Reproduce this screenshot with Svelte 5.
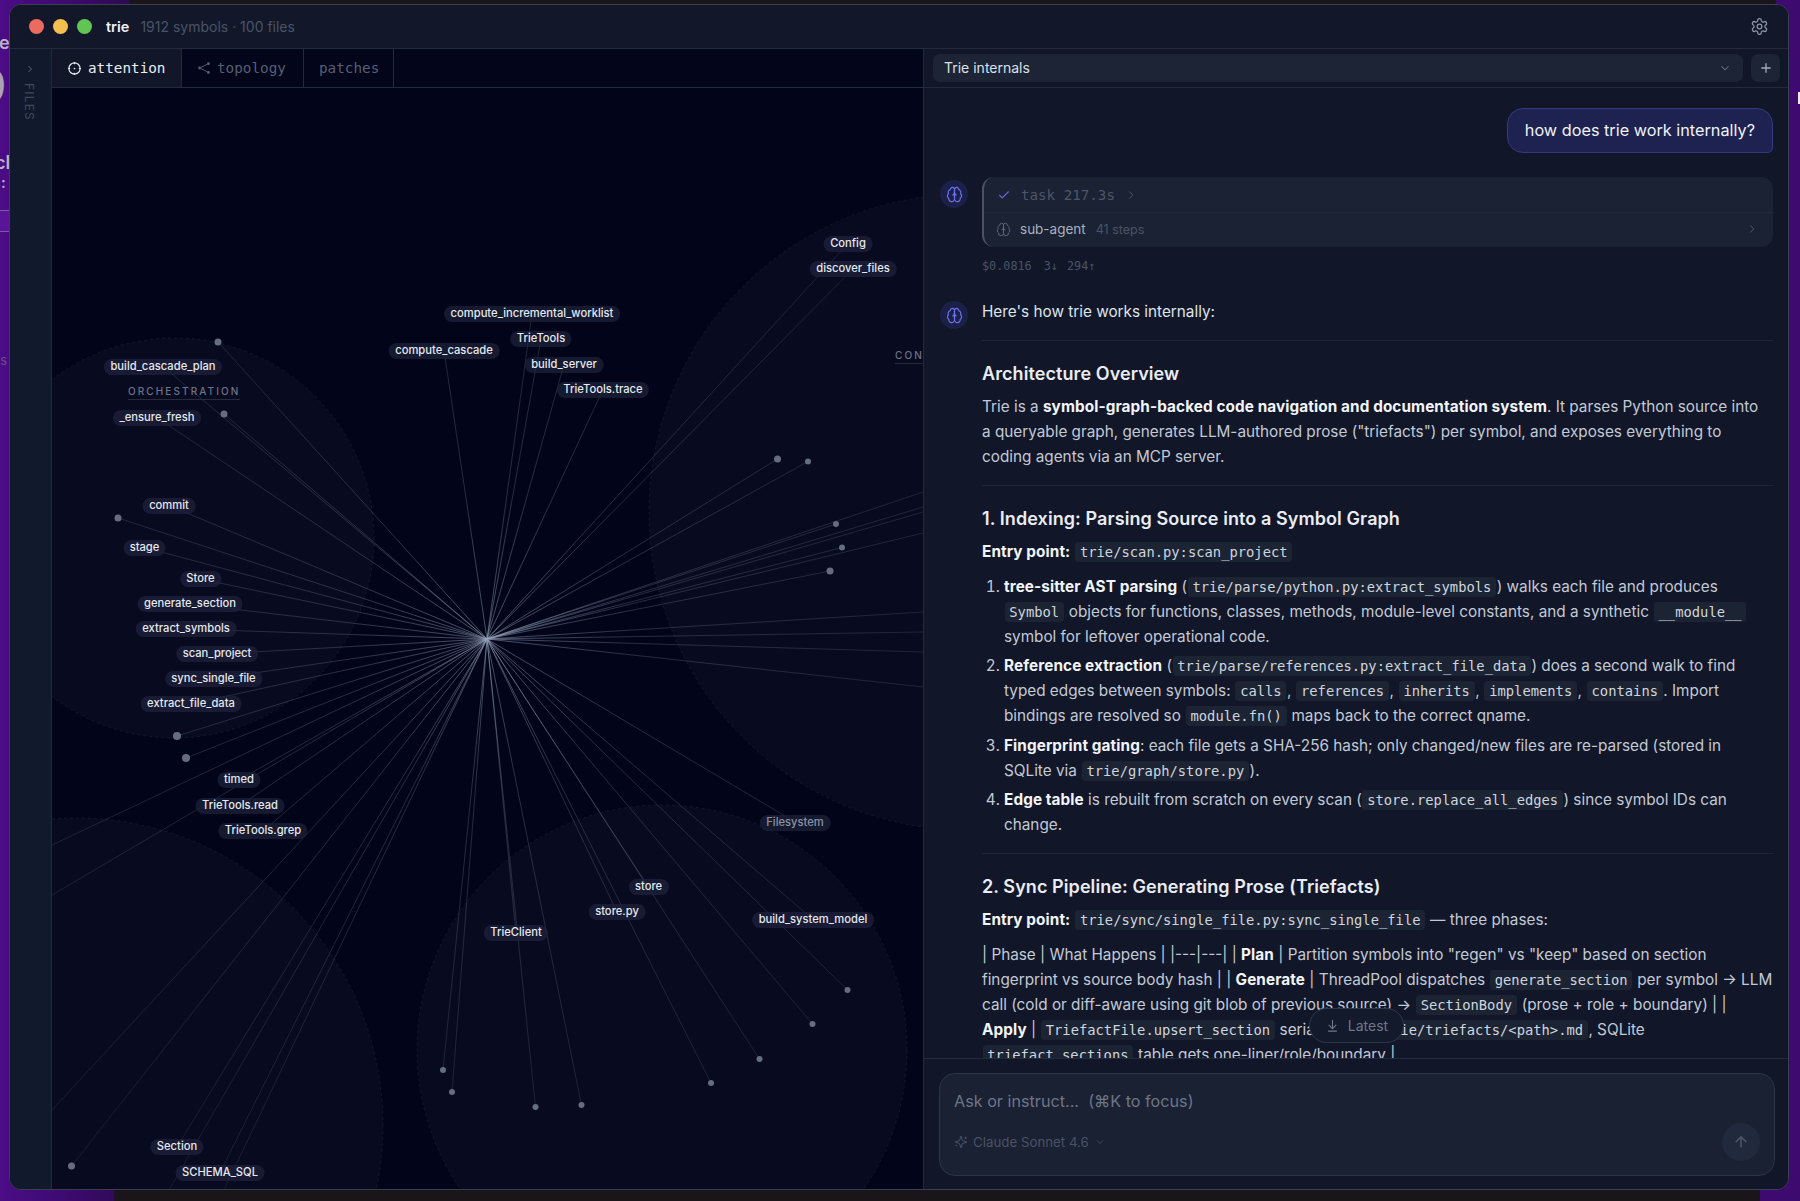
<script>
  const OX = 52, OY = 88;
  const hub = [487, 639];
  const labels = [
    ['Config', 848, 243.5], ['discover_files', 853, 269], ['compute_incremental_worklist', 532, 314],
    ['TrieTools', 541, 339], ['compute_cascade', 444, 350.5], ['build_server', 564, 364.5],
    ['TrieTools.trace', 603, 389.5], ['build_cascade_plan', 163, 366.5], ['_ensure_fresh', 157, 417.5],
    ['commit', 169, 505.5], ['stage', 144.5, 547.5], ['Store', 200.5, 579], ['generate_section', 190, 604],
    ['extract_symbols', 186, 629], ['scan_project', 217, 654], ['sync_single_file', 213.5, 679],
    ['extract_file_data', 191, 704], ['timed', 239, 780], ['TrieTools.read', 240, 805.5],
    ['TrieTools.grep', 263, 831], ['store', 648.5, 887], ['store.py', 617, 912], ['TrieClient', 516, 933],
    ['build_system_model', 813, 919.5], ['Section', 177, 1147], ['SCHEMA_SQL', 220, 1172.5]
  ];
  const dots = [
    [218, 342, 3.5], [224, 414, 3.5], [118, 518, 3.5], [177, 736, 4], [186, 758, 4], [71.5, 1166, 3.5],
    [443, 1070, 3], [452, 1092, 3], [535.5, 1107, 3], [581.5, 1105, 3], [711, 1083, 3], [759.5, 1059, 3],
    [812.5, 1024, 3], [847.5, 990, 3], [777.5, 459, 3.5], [808, 461.5, 3], [836, 524, 3], [842, 547.5, 3], [830, 571, 3.5]
  ];
  const extras = [
    [923, 492], [923, 507], [923, 512], [923, 533], [923, 612], [923, 632], [923, 652], [923, 687],
    [52, 845], [52, 895], [52, 1110], [169, 1190], [224, 1190]
  ];
  const groups = [[174, 538, 200], [76, 1125, 307], [662, 1050, 245], [967, 512, 318]];
  const brain = [
    'M12 5a3 3 0 1 0-5.997.125 4 4 0 0 0-2.526 5.77 4 4 0 0 0 .556 6.588A4 4 0 1 0 12 18Z',
    'M12 5a3 3 0 1 1 5.997.125 4 4 0 0 1 2.526 5.77 4 4 0 0 1-.556 6.588A4 4 0 1 1 12 18Z',
    'M15 13a4.5 4.5 0 0 1-3-4 4.5 4.5 0 0 1-3 4', 'M12 5v13'
  ];
</script>

<div class="desktop">
  <div class="wall-left"></div>
  <div class="wall-right"></div>
  <div class="peek peek-e">e</div>
  <div class="peek peek-9">9</div>
  <div class="peek peek-c">cl</div>
  <div class="peek peek-d">:</div>
  <div class="peek-band"></div>
  <div class="peek peek-t">ts</div>
  <div class="cursor"></div>

  <div class="window">
    <header class="titlebar">
      <span class="light red"></span><span class="light yellow"></span><span class="light green"></span>
      <strong class="app">trie</strong>
      <span class="meta">1912 symbols · 100 files</span>
      <svg class="gear" viewBox="0 0 24 24" width="19" height="19"><path d="M12.22 2h-.44a2 2 0 0 0-2 2v.18a2 2 0 0 1-1 1.73l-.43.25a2 2 0 0 1-2 0l-.15-.08a2 2 0 0 0-2.73.73l-.22.38a2 2 0 0 0 .73 2.73l.15.1a2 2 0 0 1 1 1.72v.51a2 2 0 0 1-1 1.74l-.15.09a2 2 0 0 0-.73 2.73l.22.38a2 2 0 0 0 2.73.73l.15-.08a2 2 0 0 1 2 0l.43.25a2 2 0 0 1 1 1.73V20a2 2 0 0 0 2 2h.44a2 2 0 0 0 2-2v-.18a2 2 0 0 1 1-1.73l.43-.25a2 2 0 0 1 2 0l.15.08a2 2 0 0 0 2.73-.73l.22-.39a2 2 0 0 0-.73-2.73l-.15-.08a2 2 0 0 1-1-1.74v-.5a2 2 0 0 1 1-1.74l.15-.09a2 2 0 0 0 .73-2.73l-.22-.38a2 2 0 0 0-2.73-.73l-.15.08a2 2 0 0 1-2 0l-.43-.25a2 2 0 0 1-1-1.73V4a2 2 0 0 0-2-2z"/><circle cx="12" cy="12" r="3"/></svg>
    </header>

    <div class="body">
      <aside class="rail">
        <svg viewBox="0 0 24 24" width="12" height="12" class="rail-chev"><path d="m9 6 6 6-6 6"/></svg>
        <span class="rail-label">FILES</span>
      </aside>

      <section class="graph-col">
        <nav class="tabs">
          <div class="tab active">
            <svg viewBox="0 0 16 16" width="15" height="15"><circle cx="8" cy="8" r="6"/><circle cx="8" cy="8" r="0.9" class="solid"/><path d="M8 1v2.4M8 12.6V15M1 8h2.4M12.6 8H15"/></svg>
            attention
          </div>
          <div class="tab">
            <svg viewBox="0 0 16 16" width="14" height="14"><circle cx="13" cy="3" r="1.6" class="solid"/><circle cx="3" cy="8" r="1.6" class="solid"/><circle cx="13" cy="13" r="1.6" class="solid"/><path d="M12 3.6 4 7.6M4 8.4l8 4"/></svg>
            topology
          </div>
          <div class="tab">patches</div>
        </nav>

        <div class="canvas">
          <svg class="edges" width="871" height="1102" viewBox="{OX} {OY} 871 1102">
            <defs>
              <radialGradient id="fade" gradientUnits="userSpaceOnUse" cx={hub[0]} cy={hub[1]} r="600">
                <stop offset="0" stop-color="#94a3b8" stop-opacity="0.5" />
                <stop offset="0.25" stop-color="#94a3b8" stop-opacity="0.25" />
                <stop offset="1" stop-color="#94a3b8" stop-opacity="0.11" />
              </radialGradient>
            </defs>
            {#each groups as g}
              <circle class="group" cx={g[0]} cy={g[1]} r={g[2]} />
            {/each}
            {#each labels as l}
              <line x1={hub[0]} y1={hub[1]} x2={l[1]} y2={l[2]} stroke="url(#fade)" />
            {/each}
            <line x1={hub[0]} y1={hub[1]} x2="795" y2="822" stroke="url(#fade)" />
            {#each dots as d}
              <line x1={hub[0]} y1={hub[1]} x2={d[0]} y2={d[1]} stroke="url(#fade)" stroke-width="0.8" />
            {/each}
            {#each extras as e}
              <line x1={hub[0]} y1={hub[1]} x2={e[0]} y2={e[1]} stroke="url(#fade)" stroke-width="0.8" />
            {/each}
            {#each dots as d}
              <circle class="dot" cx={d[0]} cy={d[1]} r={d[2]} />
            {/each}
          </svg>

          <div class="cluster" style="left:{128 - OX}px;top:{384 - OY}px">ORCHESTRATION</div>
          <div class="cluster" style="left:{895 - OX}px;top:{348 - OY}px">CONTROL</div>

          {#each labels as l}
            <span class="node" style="left:{l[1] - OX}px;top:{l[2] - OY}px">{l[0]}</span>
          {/each}
          <span class="node dim" style="left:{795 - OX}px;top:{822.5 - OY}px">Filesystem</span>
        </div>
      </section>

      <section class="chat">
        <div class="chat-head">
          <div class="select">
            <span>Trie internals</span>
            <svg viewBox="0 0 24 24" width="14" height="14"><path d="m6 9 6 6 6-6"/></svg>
          </div>
          <div class="plus"><svg viewBox="0 0 24 24" width="16" height="16"><path d="M5 12h14M12 5v14"/></svg></div>
        </div>

        <div class="scroll">
          <div class="user"><div class="bubble">how does trie work internally?</div></div>

          <div class="turn task-turn">
            <div class="avatar"><svg viewBox="0 0 24 24" width="17" height="17">{#each brain as p}<path d={p}/>{/each}</svg></div>
            <div class="turn-main">
              <div class="task">
                <div class="task-head">
                  <svg class="check" viewBox="0 0 24 24" width="14" height="14"><path d="M20 6 9 17l-5-5"/></svg>
                  <span>task 217.3s</span>
                  <svg class="mini" viewBox="0 0 24 24" width="14" height="14"><path d="m9 6 6 6-6 6"/></svg>
                </div>
                <div class="task-row">
                  <svg class="sub-icon" viewBox="0 0 24 24" width="15" height="15">{#each brain as p}<path d={p}/>{/each}</svg>
                  <span class="sub">sub-agent</span>
                  <span class="steps">41 steps</span>
                  <svg class="mini end" viewBox="0 0 24 24" width="14" height="14"><path d="m9 6 6 6-6 6"/></svg>
                </div>
              </div>
              <div class="cost"><span>$0.0816</span><span>3↓</span><span class="up">294↑</span></div>
            </div>
          </div>

          <div class="turn answer">
            <div class="avatar"><svg viewBox="0 0 24 24" width="17" height="17">{#each brain as p}<path d={p}/>{/each}</svg></div>
            <div class="prose">
              <p class="first">Here's how trie works internally:</p>
              <hr />
              <h3>Architecture Overview</h3>
              <p class="narrow">Trie is a <b>symbol-graph-backed code navigation and documentation system</b>. It parses Python source into a queryable graph, generates LLM-authored prose ("triefacts") per symbol, and exposes everything to coding agents via an MCP server.</p>
              <hr />
              <h3>1. Indexing: Parsing Source into a Symbol Graph</h3>
              <p><b>Entry point:</b> <code>trie/scan.py:scan_project</code></p>
              <ol>
                <li><b>tree-sitter AST parsing</b> (<code>trie/parse/python.py:extract_symbols</code>) walks each file and produces <code>Symbol</code> objects for functions, classes, methods, module-level constants, and a synthetic <code>__module__</code> symbol for leftover operational code.</li>
                <li><b>Reference extraction</b> (<code>trie/parse/references.py:extract_file_data</code>) does a second walk to find typed edges between symbols: <code>calls</code>, <code>references</code>, <code>inherits</code>, <code>implements</code>, <code>contains</code>. Import bindings are resolved so <code>module.fn()</code> maps back to the correct qname.</li>
                <li><b>Fingerprint gating</b>: each file gets a SHA-256 hash; only changed/new files are re-parsed (stored in SQLite via <code>trie/graph/store.py</code>).</li>
                <li><b>Edge table</b> is rebuilt from scratch on every scan (<code>store.replace_all_edges</code>) since symbol IDs can change.</li>
              </ol>
              <hr />
              <h3>2. Sync Pipeline: Generating Prose (Triefacts)</h3>
              <p><b>Entry point:</b> <code>trie/sync/single_file.py:sync_single_file</code> — three phases:</p>
              <p>| Phase | What Happens | |---|---| | <b>Plan</b> | Partition symbols into "regen" vs "keep" based on section fingerprint vs source body hash | | <b>Generate</b> | ThreadPool dispatches <code>generate_section</code> per symbol → LLM call (cold or diff-aware using git blob of previous source) → <code>SectionBody</code> (prose + role + boundary) | | <b>Apply</b> | <code>TriefactFile.upsert_section</code> serializes to <code>.trie/triefacts/&lt;path&gt;.md</code>, SQLite <code>triefact_sections</code> table gets one-liner/role/boundary |</p>
            </div>
          </div>
          <div class="latest">
            <svg viewBox="0 0 24 24" width="15" height="15"><path d="M12 3v13M6 11l6 6 6-6M5 21h14"/></svg>
            Latest
          </div>
        </div>

        <div class="composer">
          <div class="input">
            <div class="placeholder">Ask or instruct...&nbsp; (⌘K to focus)</div>
            <div class="input-foot">
              <div class="model">
                <svg viewBox="0 0 24 24" width="14" height="14"><path d="M9.937 15.5A2 2 0 0 0 8.5 14.063l-6.135-1.582a.5.5 0 0 1 0-.962L8.5 9.936A2 2 0 0 0 9.937 8.5l1.582-6.135a.5.5 0 0 1 .963 0L14.063 8.5A2 2 0 0 0 15.5 9.937l6.135 1.581a.5.5 0 0 1 0 .964L15.5 14.063a2 2 0 0 0-1.437 1.437l-1.582 6.135a.5.5 0 0 1-.963 0z"/><path d="M20 3v4M22 5h-4M4 17v2M5 18H3"/></svg>
                Claude Sonnet 4.6
                <svg viewBox="0 0 24 24" width="12" height="12"><path d="m6 9 6 6 6-6"/></svg>
              </div>
              <div class="send"><svg viewBox="0 0 24 24" width="18" height="18"><path d="m5 12 7-7 7 7M12 19V5"/></svg></div>
            </div>
          </div>
        </div>
      </section>
    </div>
  </div>
</div>

<style>
  :global(body) { margin: 0; background: #1a1518; }
  .desktop { position: relative; width: 1800px; height: 1201px; overflow: hidden; background: #1a1518; font-family: Inter, "Noto Sans", sans-serif; }
  .wall-left { position: absolute; left: 0; top: 0; bottom: 0; width: 130px; background: linear-gradient(90deg, #4b0c86, #3a0a6a 60%, #2d0a50); clip-path: polygon(0 0, 100% 0, 88% 100%, 0 100%); }
  .wall-right { position: absolute; right: 0; top: 0; bottom: 0; width: 40px; background: #3d0a70; clip-path: polygon(40% 0, 100% 0, 100% 100%, 0 100%, 0 8%); }
  .peek { position: absolute; color: #b9b3c6; font-weight: 600; }
  .peek-e { left: -1px; top: 32px; font-size: 18px; }
  .peek-9 { left: -22px; top: 58px; font-size: 46px; font-weight: 400; color: #a9a3b5; }
  .peek-c { left: -5px; top: 152px; font-size: 18px; }
  .peek-d { left: 1px; top: 173px; font-size: 15px; }
  .peek-t { left: -4px; top: 352px; font-size: 13px; font-weight: 400; color: #6b4a8e; }
  .peek-band { position: absolute; left: 0; top: 210px; width: 9px; height: 20px; border-top: 1px solid #7a5aa0; border-bottom: 1px solid #7a5aa0; background: #5a1498; }
  .cursor { position: absolute; right: 0; top: 92px; width: 2px; height: 12px; background: #e8e8ee; }

  .window { position: absolute; left: 9px; top: 4px; width: 1780px; height: 1186px; box-sizing: border-box; display: flex; flex-direction: column; background: #111729; border: 1px solid #3a3f50; border-radius: 12px; overflow: hidden; }

  .titlebar { height: 44px; flex: none; display: flex; align-items: center; padding: 0 20px 1px 19px; box-sizing: border-box; border-bottom: 1px solid #232a3b; background: #12182a; }
  .light { width: 15px; height: 15px; border-radius: 50%; margin-right: 9px; }
  .red { background: #ec6a5e; } .yellow { background: #f4bf4f; } .green { background: #61c554; }
  .app { margin-left: 5px; font-size: 14.5px; font-weight: 600; color: #eef1f6; }
  .meta { margin-left: 11px; font-size: 14px; color: #4a5266; }
  .gear { margin-left: auto; margin-right: -1px; fill: none; stroke: #8b94a8; stroke-width: 1.6; }

  .body { flex: 1; min-height: 0; display: flex; }
  .rail { width: 42px; flex: none; box-sizing: border-box; display: flex; flex-direction: column; align-items: center; padding: 14px 2px 0 0; background: #111a2c; border-right: 1px solid #232a3b; }
  .rail-chev { fill: none; stroke: #5c6579; stroke-width: 2; }
  .rail-label { margin-top: 8px; writing-mode: vertical-rl; font-size: 12px; letter-spacing: 1.2px; color: #3f485c; }

  .graph-col { width: 871px; flex: none; display: flex; flex-direction: column; background: #02041a; }
  .tabs { height: 39px; flex: none; box-sizing: border-box; display: flex; border-bottom: 1px solid #232a3b; background: #03051a; }
  .tab { display: flex; align-items: center; gap: 6px; padding: 0 15px; box-sizing: border-box; border-right: 1px solid #232a3b; font-family: "DejaVu Sans Mono", monospace; font-size: 14.3px; color: #565f73; }
  .tab:nth-child(1) { width: 130px; } .tab:nth-child(2) { width: 122px; } .tab:nth-child(3) { width: 90px; }
  .tab.active { background: #111729; color: #e9edf3; }
  .tab svg { flex: none; fill: none; stroke: currentColor; stroke-width: 1.2; }
  .tab svg .solid { fill: currentColor; stroke: none; }

  .canvas { position: relative; flex: 1; overflow: hidden; }
  .edges { position: absolute; left: 0; top: 0; display: block; }
  .edges line { stroke-width: 1; }
  .group { fill: rgba(255,255,255,0.028); stroke: rgba(148,163,184,0.1); stroke-dasharray: 3 3; }
  .dot { fill: #666d80; }
  .cluster { position: absolute; box-sizing: border-box; height: 16px; line-height: 14px; font-size: 10px; font-weight: 500; letter-spacing: 2.1px; color: #6c7486; border-bottom: 1px solid #262c3d; white-space: nowrap; }
  .node { position: absolute; transform: translate(-50%, -50%); height: 16px; line-height: 15px; padding: 0 6.5px; border-radius: 8px; background: rgba(30,35,58,0.72); color: #e4e8ef; font-size: 11.2px; font-weight: 500; white-space: nowrap; }
  .node.dim { color: #8a91a1; }

  .chat { flex: 1; min-width: 0; display: flex; flex-direction: column; border-left: 1px solid #232a3b; background: #111729; }
  .chat-head { height: 39px; flex: none; box-sizing: border-box; display: flex; gap: 8px; padding: 5px 8px 5px 9px; border-bottom: 1px solid #232a3b; }
  .select { flex: 1; display: flex; align-items: center; justify-content: space-between; padding: 0 11px 1px 11px; background: #1d2435; border-radius: 7px; font-size: 14px; color: #dbe0e8; }
  .select svg { fill: none; stroke: #6b7487; stroke-width: 1.8; }
  .plus { width: 29px; display: flex; align-items: center; justify-content: center; background: #1d2435; border-radius: 7px; }
  .plus svg { fill: none; stroke: #a4acbc; stroke-width: 2; }

  .scroll { position: relative; flex: 1; min-height: 0; overflow: hidden; box-sizing: border-box; padding: 20px 15px 0 16px; }
  .user { display: flex; justify-content: flex-end; }
  .bubble { height: 45px; box-sizing: border-box; display: flex; align-items: center; padding: 0 17px 2px; border: 1px solid #35397f; border-radius: 16px 16px 5px 16px; background: #1e2250; color: #f0f2f7; font-size: 16.25px; }
  .turn { display: flex; gap: 14px; }
  .task-turn { margin-top: 24px; }
  .answer { margin-top: 26px; }
  .avatar { width: 28px; height: 28px; flex: none; margin-top: 3px; border-radius: 50%; background: #1b2048; display: flex; align-items: center; justify-content: center; }
  .avatar svg { fill: none; stroke: #6c72ea; stroke-width: 1.6; }
  .answer .avatar { margin-top: 1px; }
  .turn-main { flex: 1; min-width: 0; }
  .task { height: 70px; box-sizing: border-box; border-left: 2px solid #4a5264; border-radius: 12px; background: #1b2233; }
  .task-head { height: 35px; display: flex; align-items: center; gap: 8px; padding-left: 13px; border-bottom: 1px solid #202839; font-family: "DejaVu Sans Mono", monospace; font-size: 14.2px; color: #4d5568; }
  .task-head span { margin-left: 2px; }
  .task-head .mini { margin-left: 1px; }
  .check { fill: none; stroke: #6366d8; stroke-width: 2; }
  .mini { fill: none; stroke: #4d5568; stroke-width: 1.7; }
  .task-row { height: 32px; display: flex; align-items: center; padding-left: 12px; }
  .sub-icon { fill: none; stroke: #5f687b; stroke-width: 1.5; margin-right: 9px; }
  .sub { font-size: 13.5px; color: #a9b0bf; }
  .steps { margin-left: 10px; font-size: 12.5px; color: #4a5266; }
  .end { margin-left: auto; margin-right: 14px; }
  .cost { margin-top: 12px; display: flex; gap: 12px; font-family: "DejaVu Sans Mono", monospace; font-size: 11.8px; line-height: 15px; color: #4a5266; }
  .cost .up { margin-left: -3px; }

  .prose { flex: 1; min-width: 0; font-size: 15.3px; line-height: 25px; color: #c3c9d4; margin-top: -1px; }
  .prose p { margin: 9.8px 0 0; }
  .prose p.first { margin: 0; color: #dfe3ea; }
  .prose p.narrow { padding-right: 6px; }
  .prose b { font-weight: 700; letter-spacing: 0.1px; color: #f1f4f8; }
  .prose hr { border: 0; height: 1px; background: #1f2636; margin: 16px 0 0; }
  .prose h3 { margin: 20px 0 8px; font-size: 18px; line-height: 25px; font-weight: 600; letter-spacing: 0.08px; color: #e9ecf2; }
  .prose h3 + p { margin-top: 0; }
  .prose ol { margin: 9.5px 0 0; padding-left: 22px; }
  .prose li { padding-left: 0; margin-top: 4.6px; }
  .prose li:first-child { margin-top: 0; }
  .prose code { font-family: "DejaVu Sans Mono", monospace; font-size: 13.8px; line-height: 1; padding: 2px 4.8px; margin: 0 0.5px; border-radius: 4px; background: #1c2434; color: #cfd5df; }

  .latest { position: absolute; left: 385px; top: 920px; height: 35px; width: 95px; box-sizing: border-box; display: flex; align-items: center; justify-content: center; gap: 8px; border: 1px solid #2f3749; border-radius: 18px; background: #131a2c; font-size: 14px; color: #6f778a; }
  .latest svg { fill: none; stroke: #6f778a; stroke-width: 1.8; }

  .composer { height: 131px; flex: none; box-sizing: border-box; padding: 14px 13px 13px 15px; border-top: 1px solid #232a3b; }
  .input { height: 100%; box-sizing: border-box; display: flex; flex-direction: column; padding: 17px 14px 0 14px; background: #1a2132; border: 1px solid #2c3447; border-radius: 16px; }
  .placeholder { font-size: 16.2px; line-height: 20px; color: #6d7588; }
  .input-foot { margin-top: 12px; display: flex; align-items: center; justify-content: space-between; }
  .model { display: flex; align-items: center; gap: 5px; font-size: 13.3px; color: #4a5266; }
  .model svg { fill: none; stroke: #4a5266; stroke-width: 1.7; }
  .send { width: 38px; height: 38px; border-radius: 50%; background: #202a3c; display: flex; align-items: center; justify-content: center; }
  .send svg { fill: none; stroke: #4e586c; stroke-width: 2; }
</style>
